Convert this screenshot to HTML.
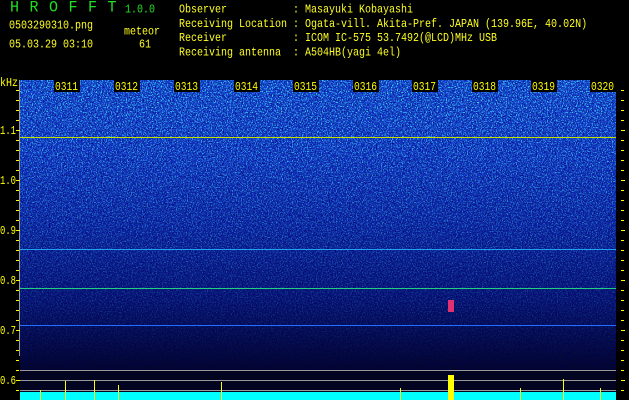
<!DOCTYPE html><html><head><style>
body{margin:0;background:#000;width:629px;height:400px;overflow:hidden;position:relative;font-family:"Liberation Mono",monospace}
.t{position:absolute;color:#ffff20;font-size:10px;line-height:12px;white-space:pre;transform:scaleY(1.2);transform-origin:0 0}
</style></head><body>
<div class="t" style="left:10px;top:2px;color:#20e020;font-size:15px;letter-spacing:10.5px;transform:scaleY(1.05)">HROFFT</div>
<div class="t" style="left:125px;top:4px;color:#20e020">1.0.0</div>
<div class="t" style="left:9px;top:20px">0503290310.png</div>
<div class="t" style="left:124px;top:26px">meteor</div>
<div class="t" style="left:9px;top:39px">05.03.29 03:10</div>
<div class="t" style="left:139px;top:39px">61</div>
<div class="t" style="left:179px;top:4px">Observer           : Masayuki Kobayashi
Receiving Location : Ogata-vill. Akita-Pref. JAPAN (139.96E, 40.02N)
Receiver           : ICOM IC-575 53.7492(@LCD)MHz USB
Receiving antenna  : A504HB(yagi 4el)</div>
<svg width="629" height="400" style="position:absolute;left:0;top:0">
<defs>
<linearGradient id="g" x1="0" y1="0" x2="0" y2="1">
<stop offset="0" stop-color="#1640d0"/><stop offset="0.25" stop-color="#1436c8"/>
<stop offset="0.5" stop-color="#0e26a8"/><stop offset="0.75" stop-color="#081478"/>
<stop offset="0.9" stop-color="#050a48"/><stop offset="1" stop-color="#03052a"/></linearGradient>
<filter id="n" x="0" y="0" width="100%" height="100%"><feTurbulence type="fractalNoise" baseFrequency="0.8" numOctaves="2" seed="3"/><feColorMatrix values="0 0 0 0 0.05  0 0 0 0 0.7  0 0 0 0 1  9 0 0 0 -5"/></filter>
<filter id="d" x="0" y="0" width="100%" height="100%"><feTurbulence type="fractalNoise" baseFrequency="0.85" numOctaves="2" seed="9"/><feColorMatrix values="0 0 0 0 0  0 0 0 0 0  0 0 0 0 0.1  -8 0 0 0 3.8"/></filter>
<linearGradient id="m" x1="0" y1="0" x2="0" y2="1"><stop offset="0" stop-color="#fff" stop-opacity="1"/><stop offset="0.6" stop-color="#fff" stop-opacity="0.35"/><stop offset="1" stop-color="#fff" stop-opacity="0"/></linearGradient>
<mask id="mk"><rect x="20" y="80" width="596" height="290" fill="url(#m)"/></mask>
</defs>
<rect x="20" y="80" width="596" height="290" fill="url(#g)"/>
<rect x="20" y="80" width="596" height="290" filter="url(#d)" opacity="0.7"/>
<rect x="20" y="80" width="596" height="290" filter="url(#n)" mask="url(#mk)"/>
<rect x="20" y="370" width="596" height="22" fill="#030420"/>
<line x1="20" y1="137.5" x2="616" y2="137.5" stroke="#c0e000" stroke-width="1"/>
<line x1="20" y1="249.5" x2="616" y2="249.5" stroke="#20a0f0" stroke-width="1"/>
<line x1="20" y1="288.5" x2="616" y2="288.5" stroke="#20d080" stroke-width="1"/>
<line x1="20" y1="325.5" x2="616" y2="325.5" stroke="#2070ff" stroke-width="1"/>
<rect x="448" y="300" width="6" height="12" fill="#e03070"/>
<g stroke="#999" stroke-width="1"><line x1="20" y1="370.5" x2="616" y2="370.5"/><line x1="20" y1="380.5" x2="616" y2="380.5"/><line x1="20" y1="390.5" x2="616" y2="390.5"/><line x1="19.5" y1="80" x2="19.5" y2="356"/></g>
<rect x="20" y="392" width="596" height="8" fill="#00ffff"/>
<g fill="#ffff00"><rect x="448" y="375" width="6" height="25"/><rect x="65" y="381" width="1" height="19"/><rect x="94" y="380" width="1" height="20"/><rect x="118" y="385" width="1" height="15"/><rect x="221" y="382" width="1" height="18"/><rect x="563" y="379" width="1" height="21"/><rect x="40" y="390" width="1" height="10"/><rect x="400" y="388" width="1" height="12"/><rect x="600" y="388" width="1" height="12"/><rect x="520" y="388" width="1" height="12"/></g>
<g fill="#ffff00" font-family="Liberation Mono,monospace" font-size="12">
<text x="0" y="86" textLength="18" lengthAdjust="spacingAndGlyphs">kHz</text>
<text x="0" y="134" textLength="16" lengthAdjust="spacingAndGlyphs">1.1</text><text x="0" y="184" textLength="16" lengthAdjust="spacingAndGlyphs">1.0</text><text x="0" y="234" textLength="16" lengthAdjust="spacingAndGlyphs">0.9</text><text x="0" y="284" textLength="16" lengthAdjust="spacingAndGlyphs">0.8</text><text x="0" y="334" textLength="16" lengthAdjust="spacingAndGlyphs">0.7</text><text x="0" y="384" textLength="16" lengthAdjust="spacingAndGlyphs">0.6</text>
</g>
<g stroke="#ffff00">
<path d="M16 90.5h3M16 100.5h3M16 110.5h3M16 120.5h3M16 140.5h3M16 150.5h3M16 160.5h3M16 170.5h3M16 190.5h3M16 200.5h3M16 210.5h3M16 220.5h3M16 240.5h3M16 250.5h3M16 260.5h3M16 270.5h3M16 290.5h3M16 300.5h3M16 310.5h3M16 320.5h3M16 340.5h3M16 350.5h3M16 360.5h3M16 370.5h3M16 390.5h3M20 130.5h-4M20 180.5h-4M20 230.5h-4M20 280.5h-4M20 330.5h-4M20 380.5h-4"/>
<path d="M621 90.5h3M621 100.5h3M621 110.5h3M621 120.5h3M621 130.5h4M621 140.5h3M621 150.5h3M621 160.5h3M621 170.5h3M621 180.5h4M621 190.5h3M621 200.5h3M621 210.5h3M621 220.5h3M621 230.5h4M621 240.5h3M621 250.5h3M621 260.5h3M621 270.5h3M621 280.5h4M621 290.5h3M621 300.5h3M621 310.5h3M621 320.5h3M621 330.5h4M621 340.5h3M621 350.5h3M621 360.5h3M621 370.5h3M621 380.5h4M621 390.5h3"/>
</g>
<g font-family="Liberation Mono,monospace" font-size="12" fill="#ffff00">
<rect x="54" y="80" width="26" height="12" fill="#000"/><text x="55" y="90" textLength="23" lengthAdjust="spacingAndGlyphs">0311</text>
<rect x="114" y="80" width="26" height="12" fill="#000"/><text x="115" y="90" textLength="23" lengthAdjust="spacingAndGlyphs">0312</text>
<rect x="174" y="80" width="26" height="12" fill="#000"/><text x="175" y="90" textLength="23" lengthAdjust="spacingAndGlyphs">0313</text>
<rect x="234" y="80" width="26" height="12" fill="#000"/><text x="235" y="90" textLength="23" lengthAdjust="spacingAndGlyphs">0314</text>
<rect x="293" y="80" width="26" height="12" fill="#000"/><text x="294" y="90" textLength="23" lengthAdjust="spacingAndGlyphs">0315</text>
<rect x="353" y="80" width="26" height="12" fill="#000"/><text x="354" y="90" textLength="23" lengthAdjust="spacingAndGlyphs">0316</text>
<rect x="412" y="80" width="26" height="12" fill="#000"/><text x="413" y="90" textLength="23" lengthAdjust="spacingAndGlyphs">0317</text>
<rect x="472" y="80" width="26" height="12" fill="#000"/><text x="473" y="90" textLength="23" lengthAdjust="spacingAndGlyphs">0318</text>
<rect x="531" y="80" width="26" height="12" fill="#000"/><text x="532" y="90" textLength="23" lengthAdjust="spacingAndGlyphs">0319</text>
<rect x="590" y="80" width="26" height="12" fill="#000"/><text x="591" y="90" textLength="23" lengthAdjust="spacingAndGlyphs">0320</text>
</g>
</svg>
</body></html>
